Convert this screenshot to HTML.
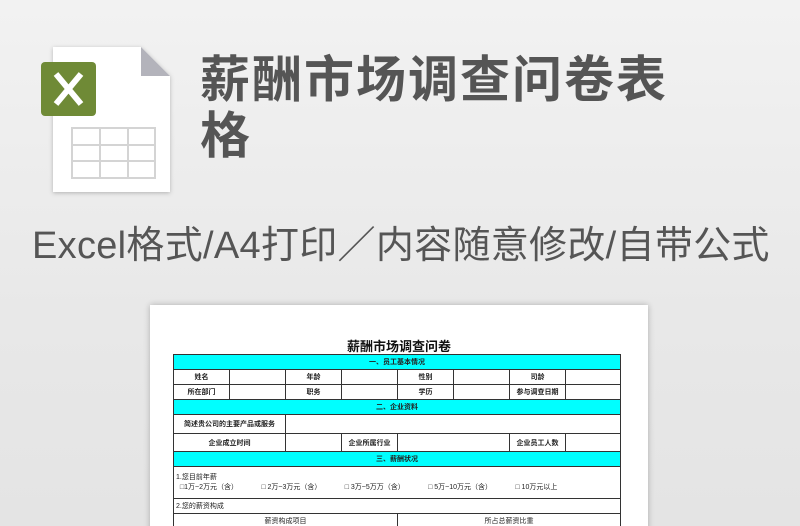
<!DOCTYPE html>
<html style="overflow:hidden;width:800px;height:526px"><head><meta charset="utf-8"><style>
*{margin:0;padding:0;box-sizing:border-box}
body{width:800px;height:526px;overflow:hidden;background:linear-gradient(#f2f2f2,#e8e8e8 60%,#e4e4e4);position:relative;font-family:"Liberation Sans","Noto Sans CJK SC",sans-serif}
.t{position:absolute;left:200px;top:52px;font-size:50px;line-height:56px;font-weight:bold;color:#555;width:480px;letter-spacing:2px}
.s{position:absolute;left:32px;top:214px;font-size:38px;color:#555;white-space:nowrap;letter-spacing:0.3px}
.doc{position:absolute;left:150px;top:305px;width:498px;height:230px;background:#fff;box-shadow:0 0 6px rgba(0,0,0,.25)}
.dt{position:absolute;left:0;width:100%;top:31px;text-align:center;font-size:13px;font-weight:bold;color:#111}
table{position:absolute;left:23px;top:49px;width:447px;border-collapse:collapse;table-layout:fixed;font-size:7px;color:#222}
td{border:1px solid #333;text-align:center;height:15px;padding:0;font-weight:bold;white-space:nowrap;overflow:hidden}
td.c{background:#00ffff}
td.n{font-weight:normal;text-align:left;padding-left:2px}
</style></head><body>
<svg style="position:absolute;left:36px;top:40px" width="145" height="160">
<defs><filter id="f"><feDropShadow dx="0" dy="1" stdDeviation="2" flood-opacity=".25"/></filter></defs>
<path d="M17 7 H105 L134 36 V152 H17 Z" fill="#fff" filter="url(#f)"/>
<path d="M105 7 L134 36 H105 Z" fill="#b3b3bb"/>
<rect x="5" y="22" width="55" height="54" rx="4" fill="#6f8a36"/>
<path d="M20 34 L45 64 M45 34 L20 64" stroke="#fff" stroke-width="6"/>
<g stroke="#d4d4d4" stroke-width="2" fill="none"><rect x="36" y="88" width="83" height="50"/><path d="M64 88V138M92 88V138M36 105H119M36 121H119"/></g>
</svg>
<div class="t">薪酬市场调查问卷表格</div>
<div class="s">Excel格式/A4打印／内容随意修改/自带公式</div>
<div class="doc">
<div class="dt">薪酬市场调查问卷</div>
<table>
<colgroup><col style="width:56px"><col style="width:56px"><col style="width:56px"><col style="width:56px"><col style="width:56px"><col style="width:56px"><col style="width:56px"><col style="width:55px"></colgroup>
<tr><td class="c" colspan="8">一、员工基本情况</td></tr>
<tr><td>姓名</td><td></td><td>年龄</td><td></td><td>性别</td><td></td><td>司龄</td><td></td></tr>
<tr><td>所在部门</td><td></td><td>职务</td><td></td><td>学历</td><td></td><td>参与调查日期</td><td></td></tr>
<tr><td class="c" colspan="8">二、企业资料</td></tr>
<tr><td colspan="2" style="height:19px">简述贵公司的主要产品或服务</td><td colspan="6"></td></tr>
<tr><td colspan="2" style="height:18px">企业成立时间</td><td></td><td>企业所属行业</td><td colspan="2"></td><td>企业员工人数</td><td></td></tr>
<tr><td class="c" colspan="8">三、薪酬状况</td></tr>
<tr><td class="n" colspan="8" style="height:32px;line-height:10px">1.您目前年薪<br>&nbsp;&nbsp;□1万~2万元（含）&nbsp;&nbsp;&nbsp;&nbsp;&nbsp;&nbsp;&nbsp;&nbsp;&nbsp;&nbsp;&nbsp;&nbsp;□ 2万~3万元（含）&nbsp;&nbsp;&nbsp;&nbsp;&nbsp;&nbsp;&nbsp;&nbsp;&nbsp;&nbsp;&nbsp;&nbsp;□ 3万~5万万（含）&nbsp;&nbsp;&nbsp;&nbsp;&nbsp;&nbsp;&nbsp;&nbsp;&nbsp;&nbsp;&nbsp;&nbsp;□ 5万~10万元（含）&nbsp;&nbsp;&nbsp;&nbsp;&nbsp;&nbsp;&nbsp;&nbsp;&nbsp;&nbsp;&nbsp;&nbsp;□ 10万元以上</td></tr>
<tr><td class="n" colspan="8">2.您的薪资构成</td></tr>
<tr><td colspan="4" style="font-weight:normal">薪资构成项目</td><td colspan="4" style="font-weight:normal">所占总薪资比重</td></tr>
<tr><td colspan="4"></td><td colspan="4"></td></tr>
</table>
</div>
</body></html>
